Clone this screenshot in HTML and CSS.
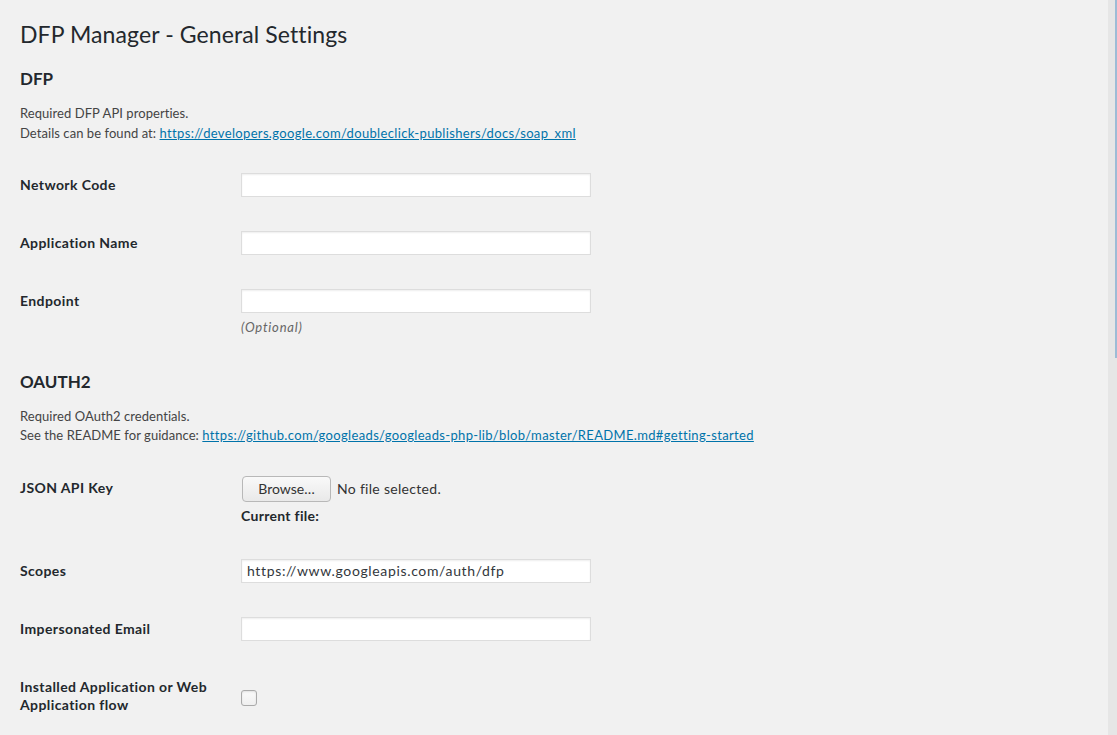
FILE: index.html
```html
<!DOCTYPE html>
<html>
<head>
<meta charset="utf-8">
<title>DFP Manager - General Settings</title>
<link rel="stylesheet" href="styles.css">
</head>
<body>
<div class="page">
  <div class="wrap">
    <h1 class="title">DFP Manager - General Settings</h1>

    <h2 class="section">DFP</h2>
    <p class="intro">Required DFP API properties.<br>Details can be found at: <a href="#">https://developers.google.com/doubleclick-publishers/docs/soap_xml</a></p>

    <div class="form">
      <div class="row">
        <div class="label">Network Code</div>
        <div class="field"><input class="text" type="text"></div>
      </div>
      <div class="row">
        <div class="label">Application Name</div>
        <div class="field"><input class="text" type="text"></div>
      </div>
      <div class="row">
        <div class="label">Endpoint</div>
        <div class="field"><input class="text" type="text"><p class="desc">(Optional)</p></div>
      </div>
    </div>

    <h2 class="section section-2">OAUTH2</h2>
    <p class="intro">Required OAuth2 credentials.<br>See the README for guidance: <a href="#">https://github.com/googleads/googleads-php-lib/blob/master/README.md#getting-started</a></p>

    <div class="form">
      <div class="row">
        <div class="label">JSON API Key</div>
        <div class="field">
          <div class="file"><span class="browse">Browse…</span><span class="nofile">No file selected.</span></div>
          <div class="current">Current file:</div>
        </div>
      </div>
      <div class="row">
        <div class="label">Scopes</div>
        <div class="field"><input class="text" type="text" value="https://www.googleapis.com/auth/dfp"></div>
      </div>
      <div class="row">
        <div class="label">Impersonated Email</div>
        <div class="field"><input class="text" type="text"></div>
      </div>
      <div class="row">
        <div class="label">Installed Application or Web<br>Application flow</div>
        <div class="field"><span class="check"></span></div>
      </div>
    </div>
  </div>
  <div class="scrollbar"><div class="thumb"></div></div>
</div>
</body>
</html>
```

FILE: styles.css
```css
html, body {
  margin: 0;
  padding: 0;
  height: 100%;
  overflow: hidden;
  background: #f1f1f1;
}

body {
  font-family: Lato, "Open Sans", "Liberation Sans", sans-serif;
  color: #444;
  font-size: 13px;
}

.page {
  display: flex;
  height: 100%;
}

.wrap {
  flex: 1;
  padding-left: 20px;
}

.title {
  margin: 0;
  padding-top: 19px;
  font-size: 23px;
  line-height: 30px;
  font-weight: 400;
  letter-spacing: 0.1px;
  color: #23282d;
}

.section {
  margin: 20px 0 0;
  font-size: 17px;
  line-height: 20px;
  font-weight: 700;
  color: #23282d;
}

.section-2 {
  margin-top: 17px;
}

.intro {
  margin: 15px 0 13px;
  line-height: 19.5px;
  letter-spacing: 0.06px;
  color: #444;
}

.intro a {
  color: #0073aa;
  text-decoration: underline;
  letter-spacing: 0.34px;
}

.row {
  display: flex;
  align-items: flex-start;
}

.label {
  width: 221px;
  flex: none;
  padding-top: 20px;
  padding-bottom: 15px;
  font-size: 14px;
  line-height: 18px;
  font-weight: 700;
  letter-spacing: 0.4px;
  color: #23282d;
}

.field {
  padding-top: 17px;
  padding-bottom: 17px;
}

.text {
  display: block;
  box-sizing: border-box;
  width: 350px;
  height: 24px;
  margin: 0;
  padding: 2px 5px;
  border: 1px solid #ddd;
  box-shadow: inset 0 1px 2px rgba(0,0,0,0.07);
  background: #fff;
  font-family: inherit;
  font-size: 14px;
  letter-spacing: 0.65px;
  color: #32373c;
  outline: none;
}

.desc {
  margin: 5px 0 0;
  font-style: italic;
  line-height: 19.5px;
  letter-spacing: 0.8px;
  color: #666;
}

.file {
  display: flex;
  align-items: center;
  margin-left: 1px;
}

.browse {
  box-sizing: border-box;
  width: 89px;
  height: 26px;
  display: flex;
  align-items: center;
  justify-content: center;
  border: 1px solid #b8b8b8;
  border-radius: 4px;
  background: linear-gradient(#f9f9f9, #e9e9e9);
  font-size: 14px;
  color: #333;
}

.nofile {
  margin-left: 6px;
  font-size: 14px;
  letter-spacing: 0.3px;
  color: #333;
}

.current {
  margin-top: 5px;
  font-size: 14px;
  line-height: 18px;
  font-weight: 700;
  letter-spacing: 0.3px;
  color: #23282d;
}

.check {
  display: block;
  box-sizing: border-box;
  width: 16px;
  height: 16px;
  margin-top: 15px;
  border: 1px solid #aaa;
  border-radius: 3px;
  background: linear-gradient(#fafafa, #f0f0f0);
  box-shadow: inset 0 1px 2px rgba(0,0,0,0.1);
}

.scrollbar {
  flex: none;
  width: 9px;
  height: 100%;
  background: #e6e6e6;
  display: flex;
  justify-content: flex-end;
}

.thumb {
  width: 2px;
  height: 358px;
  background: #9dbcd6;
}
```
